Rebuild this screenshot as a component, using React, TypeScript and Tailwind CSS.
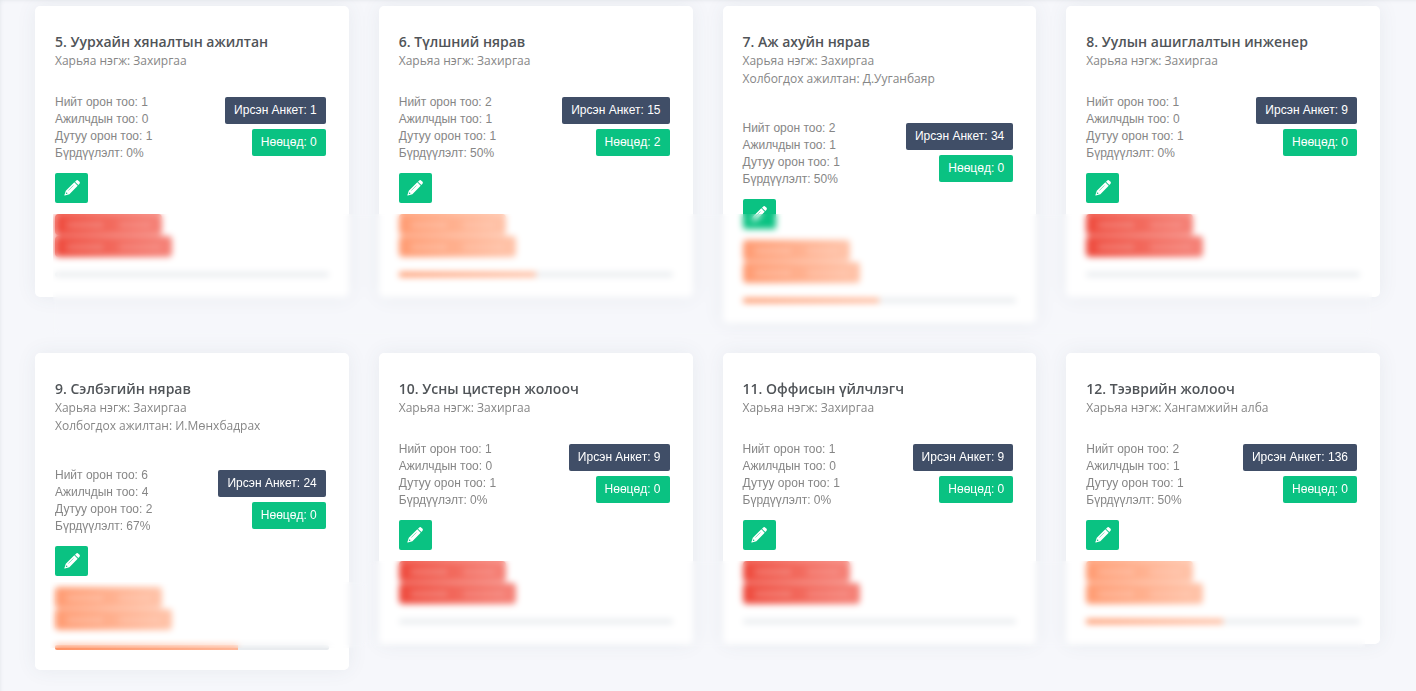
import { clsx } from "clsx";

type Job = {
  id: number;
  title: string;
  unit: string;
  staff?: string;
  total: number;
  workers: number;
  missing: number;
  percent: number;
  forms: number;
  reserve: number;
};

const rows: Job[][] = [
  [
    { id: 5, title: "Уурхайн хяналтын ажилтан", unit: "Захиргаа", total: 1, workers: 0, missing: 1, percent: 0, forms: 1, reserve: 0 },
    { id: 6, title: "Түлшний нярав", unit: "Захиргаа", total: 2, workers: 1, missing: 1, percent: 50, forms: 15, reserve: 2 },
    { id: 7, title: "Аж ахуйн нярав", unit: "Захиргаа", staff: "Д.Ууганбаяр", total: 2, workers: 1, missing: 1, percent: 50, forms: 34, reserve: 0 },
    { id: 8, title: "Уулын ашиглалтын инженер", unit: "Захиргаа", total: 1, workers: 0, missing: 1, percent: 0, forms: 9, reserve: 0 },
  ],
  [
    { id: 9, title: "Сэлбэгийн нярав", unit: "Захиргаа", staff: "И.Мөнхбадрах", total: 6, workers: 4, missing: 2, percent: 67, forms: 24, reserve: 0 },
    { id: 10, title: "Усны цистерн жолооч", unit: "Захиргаа", total: 1, workers: 0, missing: 1, percent: 0, forms: 9, reserve: 0 },
    { id: 11, title: "Оффисын үйлчлэгч", unit: "Захиргаа", total: 1, workers: 0, missing: 1, percent: 0, forms: 9, reserve: 0 },
    { id: 12, title: "Тээврийн жолооч", unit: "Хангамжийн алба", total: 2, workers: 1, missing: 1, percent: 50, forms: 136, reserve: 0 },
  ],
];

const PencilIcon = () => (
  <svg viewBox="0 0 16 16" className="size-4" fill="currentColor" aria-hidden="true">
    {/* eraser */}
    <path d="M11 1.7 12 .7a1.7 1.7 0 0 1 2.4 0l.9.9a1.7 1.7 0 0 1 0 2.4l-1 1z" />
    {/* body and tip */}
    <path d="M10.3 2.3 13.7 5.7 5.4 14.2.9 15.5a.4.4 0 0 1-.5-.5L1.8 10.7z" />
    <path d="M4.3 10.6 9.4 5.5" fill="none" stroke="#0ac282" strokeWidth=".5" />
    <circle cx="2.6" cy="13.3" r=".8" fill="#0ac282" />
  </svg>
);

const Tag = ({ empty, className }: { empty: boolean; className: string }) => (
  <div
    className={clsx(
      "flex h-[21px] items-center gap-4 rounded-sm bg-linear-to-r px-3",
      empty ? "from-[#ee4a3d] to-[#f58379]" : "from-[#ff9b72] to-[#ffc4aa]",
      className
    )}
  >
    <span className="h-1.5 w-9 bg-white/20" />
    <span className="h-1.5 flex-1 bg-white/15" />
  </div>
);

const JobCard = ({ job }: { job: Job }) => {
  const empty = job.percent === 0;

  return (
    <article className="rounded-[5px] bg-white px-5 pt-[26px] pb-5 shadow-[0_0_20px_rgba(69,90,100,0.08)]">
      <h5 className="font-['Open_Sans',sans-serif] text-sm leading-5 font-semibold text-[#505458]">
        {job.id}. {job.title}
      </h5>
      <p className="font-['Open_Sans',sans-serif] text-xs leading-[18px] text-[#868686]">
        Харьяа нэгж: {job.unit}
      </p>
      {job.staff && (
        <p className="mb-8 font-['Open_Sans',sans-serif] text-xs leading-[18px] text-[#868686]">
          Холбогдох ажилтан: {job.staff}
        </p>
      )}

      {/* stats */}
      <div className={clsx("flex items-start justify-between", !job.staff && "mt-6")}>
        <div className="text-xs leading-[17px] text-[#868686]">
          <p>Нийт орон тоо: {job.total}</p>
          <p>Ажилчдын тоо: {job.workers}</p>
          <p>Дутуу орон тоо: {job.missing}</p>
          <p>Бүрдүүлэлт: {job.percent}%</p>
        </div>
        <div className="mt-[3px] mr-[3px] flex flex-col items-end gap-[5px] text-xs text-white">
          <button type="button" className="h-[27px] rounded-xs bg-[#404e67] px-[9px] pb-0.5">
            Ирсэн Анкет: {job.forms}
          </button>
          <button type="button" className="h-[27px] rounded-xs bg-[#0ac282] px-[9px] pb-0.5">
            Нөөцөд: {job.reserve}
          </button>
        </div>
      </div>

      <button
        type="button"
        aria-label="Засах"
        className="mt-[11px] flex h-[30px] w-[33px] items-center justify-center rounded-xs bg-[#0ac282] text-white"
      >
        <PencilIcon />
      </button>

      {/* tags + progress */}
      <div className="mt-[11px] flex flex-col gap-px">
        <Tag empty={empty} className="w-[107px]" />
        <Tag empty={empty} className="w-[117px]" />
      </div>
      <div className="mt-[15px] h-[5px] overflow-hidden rounded-xs bg-[#e9ecef]">
        <div
          className="h-full bg-linear-to-r from-[#fe9365] to-[#feb798]"
          style={{ width: `${job.percent}%` }}
        />
      </div>
    </article>
  );
};

const App = () => {
  return (
    <main className="flex flex-col gap-[30px] overflow-hidden bg-[#f6f7fb] pt-1.5 pb-[21px] font-['Liberation_Sans',Arial,sans-serif] shadow-[inset_4px_4px_4px_-4px_rgba(69,90,100,0.12)]">
      {rows.map((jobs, i) => (
        <section key={i} className="relative">
          <div className="grid grid-cols-4 items-start gap-[30px] pr-9 pl-[35px]">
            {jobs.map((job) => (
              <JobCard key={job.id} job={job} />
            ))}
          </div>

          {/* frosted strips over the private part of the cards */}
          {i === 0 ? (
            <div className="absolute top-[208px] right-11 -bottom-3 left-[53px] backdrop-blur-[3px]" />
          ) : (
            <>
              <div className="absolute top-[229px] bottom-[22px] left-[50px] w-[318px] backdrop-blur-[3px]" />
              <div className="absolute top-[208px] right-[51px] bottom-[22px] left-[368px] backdrop-blur-[3px]" />
            </>
          )}
        </section>
      ))}
    </main>
  );
};

export default App;
